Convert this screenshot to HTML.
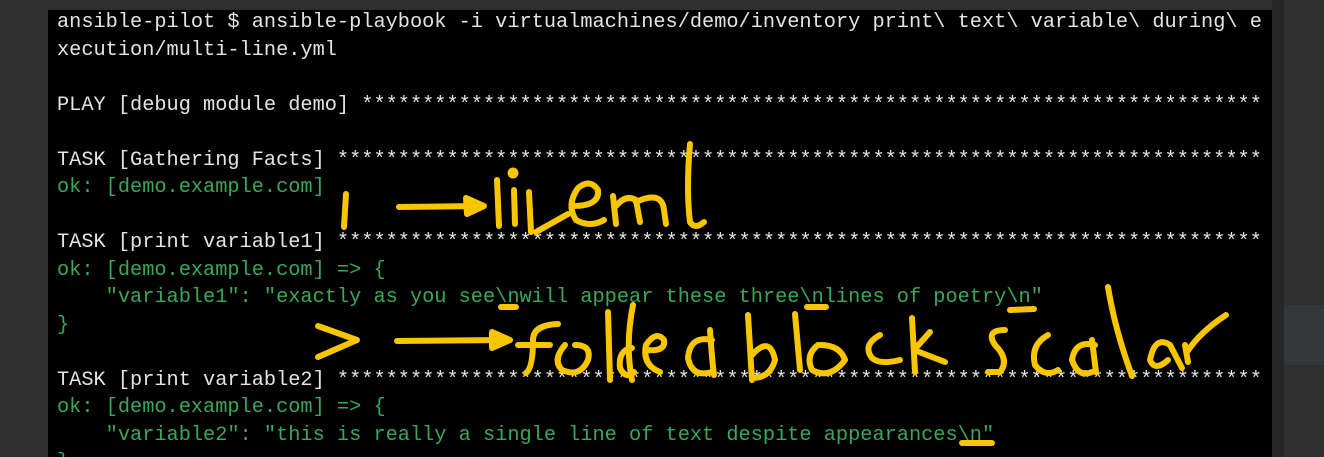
<!DOCTYPE html>
<html><head><meta charset="utf-8"><style>
html,body{margin:0;padding:0;width:1324px;height:457px;overflow:hidden;background:#2e2e2e}
#wrap{position:absolute;left:0;top:0;width:1324px;height:457px;overflow:hidden}
#term{position:absolute;left:48px;top:10px;width:1224px;height:447px;background:#000}
#strip{position:absolute;left:1272px;top:0;width:12px;height:457px;background:#262626}
#side{position:absolute;left:1284px;top:0;width:40px;height:457px;background:#2f2f2f}
#side2{position:absolute;left:1284px;top:305px;width:40px;height:60px;background:#34383b}
pre{position:absolute;left:57px;top:9px;margin:0;font-family:"Liberation Mono",monospace;font-size:20.3px;line-height:27.5px;color:#e4e4e4;white-space:pre}
.g{color:#3aa858}
svg{position:absolute;left:0;top:0}
</style></head><body><div id="wrap">
<div id="term"></div><div id="strip"></div><div id="side"></div><div id="side2"></div>
<pre>ansible-pilot $ ansible-playbook -i virtualmachines/demo/inventory print\ text\ variable\ during\ e
xecution/multi-line.yml

PLAY [debug module demo] **************************************************************************

TASK [Gathering Facts] ****************************************************************************
<span class="g">ok: [demo.example.com]</span>

TASK [print variable1] ****************************************************************************
<span class="g">ok: [demo.example.com] =&gt; {
    "variable1": "exactly as you see\nwill appear these three\nlines of poetry\n"
}</span>

TASK [print variable2] ****************************************************************************
<span class="g">ok: [demo.example.com] =&gt; {
    "variable2": "this is really a single line of text despite appearances\n"
}</span></pre>
<svg width="1324" height="457" viewBox="0 0 1324 457" fill="none" stroke="#f7c600" stroke-width="6" stroke-linecap="round" stroke-linejoin="round">
<path d="M346 194 L344 227"/>
<path d="M399 207 L482 206"/><path d="M466 198 L484 206 L467 214 Z"/>
<path d="M497 180 L499 226"/><path d="M514 190 L515 224"/><circle cx="513" cy="173" r="2.5" fill="#f7c600"/>
<path d="M529 192 L531 232 M536 232 L568 214"/>
<path d="M573 206 Q600 206 598 190 Q590 178 578 188 Q566 205 576 220 Q590 228 604 220"/>
<path d="M613 196 L616 224 M616 206 Q626 194 636 200 L640 222 M636 202 Q662 190 664 210 L666 224"/>
<path d="M690 144 Q686 190 690 222 Q695 230 704 222"/>
<path d="M318 326 L357 340 L318 357"/>
<path d="M397 341 L505 340"/><path d="M492 332 L510 340 L492 348 Z"/>
<path d="M501 307 L516 307"/>
<path d="M526 373 Q533 368 533 340 Q533 325 558 324 M518 345 L550 345"/>
<path d="M565 345 Q552 360 562 370 Q580 378 588 360 Q592 345 575 345"/>
<path d="M608 312 L610 380"/>
<path d="M633 305 Q625 345 632 380 M632 348 Q618 350 620 368 Q626 380 634 372"/>
<path d="M646 350 Q666 352 664 340 Q656 330 646 345 Q642 365 660 372"/>
<path d="M710 330 Q712 360 714 375 M712 340 Q690 335 688 358 Q692 378 712 372"/>
<path d="M748 315 L752 380 M752 355 Q770 335 775 360 Q770 378 752 378"/>
<path d="M795 314 L800 370"/>
<path d="M818 345 Q805 355 812 370 Q830 380 845 360 Q840 345 820 345"/>
<path d="M880 335 Q862 345 872 358 Q880 365 900 360"/>
<path d="M912 318 L915 372 M914 350 L930 332 M914 350 L945 362"/>
<path d="M807 307 L826 307 M1010 310 L1034 309 M962 443 L992 443"/>
<path d="M1005 330 Q985 330 995 345 Q1010 360 1000 372 L988 372"/>
<path d="M1048 335 Q1030 345 1035 365 Q1045 378 1058 370"/>
<path d="M1095 345 Q1075 340 1072 360 Q1078 378 1092 372 M1092 340 L1096 372"/>
<path d="M1108 287 Q1115 330 1132 376"/>
<path d="M1170 345 Q1155 335 1150 360 Q1155 372 1168 360 M1170 345 L1182 368"/>
<path d="M1185 345 L1188 362 M1187 352 Q1200 332 1226 315"/>
</svg>
</div></body></html>
